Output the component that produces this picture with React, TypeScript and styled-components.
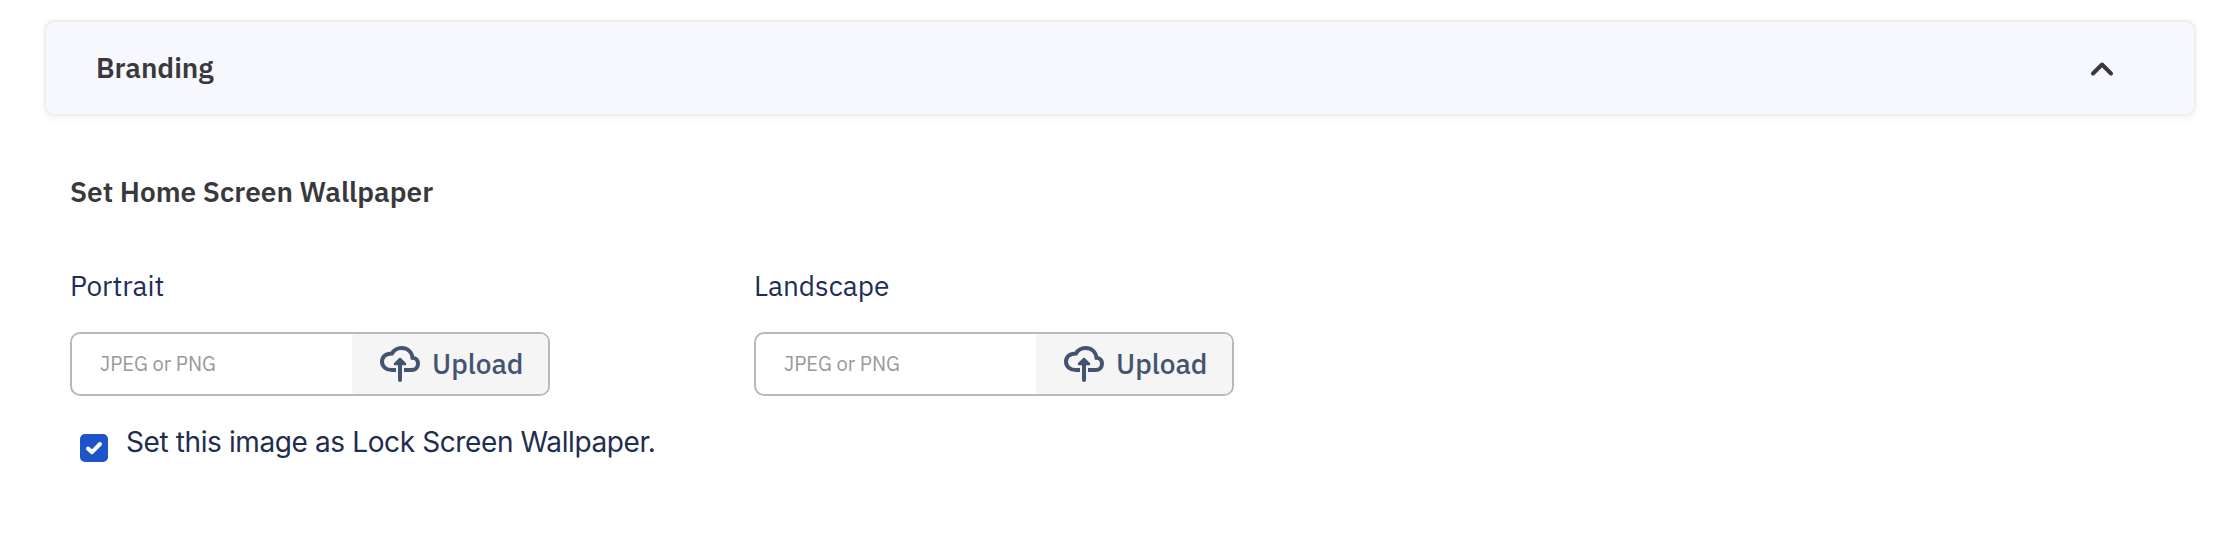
import React, { useState } from "react";
import styled, { createGlobalStyle } from "styled-components";

const GlobalStyle = createGlobalStyle`
  * { box-sizing: border-box; }
  body {
    margin: 0;
    background: #fff;
    font-family: "IBM Plex Sans", Roboto, "Liberation Sans", sans-serif;
    font-size: 28px;
    line-height: 36px;
  }
`;

const Page = styled.main`
  height: 548px;
  padding: 20px 36px 0 44px;
`;

const PanelHeader = styled.header`
  display: flex;
  align-items: center;
  justify-content: space-between;
  height: 96px;
  padding: 0 80px 0 50px;
  border: 2px solid #eeeff1;
  border-radius: 10px;
  background: #f7f8fd;
  box-shadow: 0 2px 8px rgba(0, 0, 0, 0.05);
`;

const Heading = styled.h2`
  margin: 0;
  color: #39393d;
  font-size: 28px;
  font-weight: 600;
  white-space: nowrap;
`;

const ToggleButton = styled.button`
  display: flex;
  padding: 2px 0 0;
  border: 0;
  background: none;
`;

const Section = styled.section`
  padding: 58px 0 0 26px;
`;

const Fields = styled.div`
  display: grid;
  grid-template-columns: 480px 480px;
  column-gap: 204px;
  margin-top: 58px;
`;

const Field = styled.div`
  display: flex;
  flex-direction: column;
  gap: 28px;
`;

const Label = styled.div`
  color: #1f2d58;
`;

const FileBox = styled.div`
  display: flex;
  height: 64px;
  overflow: hidden;
  border: 2px solid #b9b9b9;
  border-radius: 10px;
  background: #fff;
`;

const Placeholder = styled.span`
  display: flex;
  flex: 1;
  align-items: center;
  padding-left: 28px;
  color: #999;
  font-size: 20px;
`;

const UploadButton = styled.button`
  display: flex;
  align-items: center;
  gap: 12px;
  width: 196px;
  padding: 0 0 0 28px;
  border: 0;
  border-radius: 4px 0 0 4px;
  background: #f5f5f5;
  color: #44536f;
  font: 500 28px/36px "IBM Plex Sans", Roboto, "Liberation Sans", sans-serif;
`;

const CheckRow = styled.label`
  display: flex;
  align-items: flex-start;
  gap: 18px;
  margin-top: 28px;
  padding-left: 10px;
`;

const CheckBox = styled.span`
  display: flex;
  width: 28px;
  height: 28px;
  margin-top: 10px;
  border-radius: 5px;
  background: #1d54c8;
`;

const CheckText = styled.span`
  color: #1f2d50;
  font-family: Inter, "Liberation Sans", sans-serif;
  font-size: 28px;
  letter-spacing: -0.39px;
`;

const CloudUpload = () => (
  <svg width="40" height="36" viewBox="0 0 40 36" fill="none" stroke="#44536f" strokeWidth="4">
    <path d="M16 24H12C6 24 2 20.500 2 15.800C2 10.800 5.500 7.500 12 7.500C14 4 17.500 2 21.500 2C27.500 2 31.800 6 32.500 11.800C36 12 38 14.500 38 17.800C38 21.500 35.500 24 31.500 24H24" />
    <path d="M20 34V15" strokeLinecap="round" />
    <path d="M15 18L20 13L25 18Z" fill="#44536f" strokeWidth="2.500" strokeLinejoin="round" />
  </svg>
);

const Chevron = () => (
  <svg width="24" height="16" viewBox="0 0 24 16" fill="none" stroke="#39393d" strokeWidth="4" strokeLinecap="round" strokeLinejoin="round">
    <path d="M3 12.500L12 3.500L21 12.500" />
  </svg>
);

const UploadField = ({ label }: { label: string }) => (
  <Field>
    <Label>{label}</Label>
    <FileBox>
      <Placeholder>JPEG or PNG</Placeholder>
      <UploadButton type="button">
        <CloudUpload />
        Upload
      </UploadButton>
    </FileBox>
  </Field>
);

export default function App() {
  const [checked, setChecked] = useState(true);
  return (
    <>
      <GlobalStyle />
      <Page>
        <PanelHeader>
          <Heading>Branding</Heading>
          <ToggleButton type="button" aria-label="Collapse">
            <Chevron />
          </ToggleButton>
        </PanelHeader>
        <Section>
          <Heading>Set Home Screen Wallpaper</Heading>
          <Fields>
            <UploadField label="Portrait" />
            <UploadField label="Landscape" />
          </Fields>
          <CheckRow onClick={() => setChecked(!checked)}>
            <CheckBox>
              {checked && (
                <svg width="28" height="28" viewBox="0 0 28 28" fill="none" stroke="#fff" strokeWidth="4" strokeLinecap="round" strokeLinejoin="round">
                  <path d="M8 14.500L12 18.200L20 10" />
                </svg>
              )}
            </CheckBox>
            <CheckText>Set this image as Lock Screen Wallpaper.</CheckText>
          </CheckRow>
        </Section>
      </Page>
    </>
  );
}
